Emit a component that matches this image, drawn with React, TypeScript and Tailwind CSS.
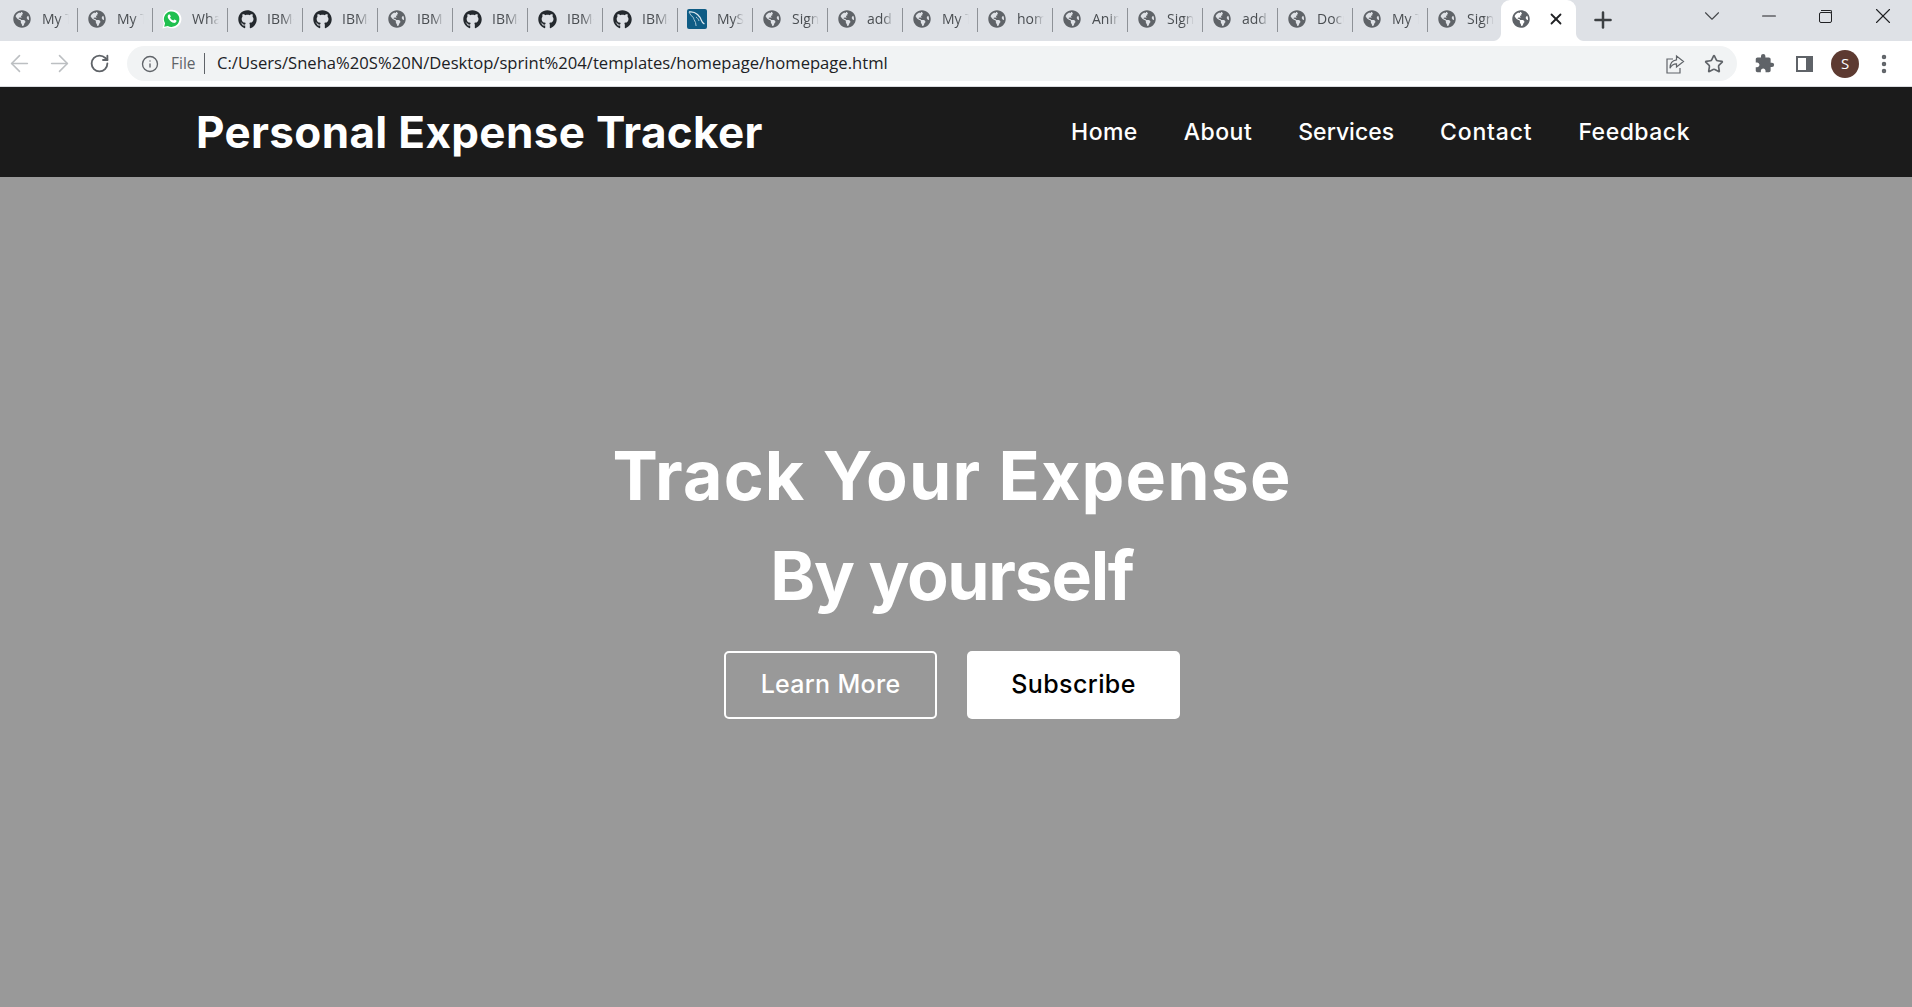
import { FaGlobeAmericas, FaGithub } from "react-icons/fa";
import { MdExtension } from "react-icons/md";
import { ArrowLeft, ArrowRight, RotateCw, Info, Star, Plus, X, ChevronDown, Minus, EllipsisVertical } from "lucide-react";

type Kind = "globe" | "github" | "whatsapp" | "mysql";
const tabs: [Kind, string][] = [
  ["globe", "My Tracker"], ["globe", "My Tracker"], ["whatsapp", "WhatsApp"],
  ["github", "IBM-EPBL"], ["github", "IBM-EPBL"], ["globe", "IBM Cloud"],
  ["github", "IBM-EPBL"], ["github", "IBM-EPBL"], ["github", "IBM-EPBL"],
  ["mysql", "MySQL"], ["globe", "Sign in"], ["globe", "add expense"],
  ["globe", "My Tracker"], ["globe", "homepage"], ["globe", "Animation"],
  ["globe", "Sign in"], ["globe", "add expense"], ["globe", "Document"],
  ["globe", "My Tracker"], ["globe", "Sign in"],
];

function TabIcon({ kind }: { kind: Kind }) {
  if (kind === "github") return <FaGithub className="w-[19px] h-[19px] text-[#24292e] shrink-0" />;
  if (kind === "whatsapp")
    return (
      <svg viewBox="0 0 24 24" className="w-[20px] h-[20px] shrink-0">
        <path d="M0.5 23.5l1.7-6.2A11.2 11.2 0 1 1 6.6 21.8z" fill="#ffffff" />
        <path d="M2.6 21.4l1.1-4.2A9.3 9.3 0 1 1 7 20.3z" fill="#1fc04f" />
        <path
          d="M8.6 6.6c-.5 0-1.3.5-1.6 1.4-.4 1.2 0 2.8 1.4 4.6 1.6 2.2 3.6 3.6 5.6 4 1.3.3 2.6-.3 3.1-1.3.3-.6.3-1.3.2-1.4l-2.5-1.3-1.2 1.3c-1.7-.6-3.2-2-4-3.7l1-1.2-1.1-2.4z"
          fill="#ffffff"
        />
      </svg>
    );
  if (kind === "mysql")
    return (
      <svg viewBox="0 0 20 20" className="w-[20px] h-[20px] shrink-0">
        <rect width="20" height="20" rx="2" fill="#0f5c85" />
        <path d="M2 3c3-.6 6 .3 8.5 2.4 2.300 2 3.300 4 3.900 6 .4 1.300 1.400 2.600 3 3.600" fill="none" stroke="#dfe9ef" strokeWidth="1.300" />
        <path d="M2 3l2 3.500c1.500.6 2.500 2 3 4l1.500 3 .6 3.500M9 8c1.600 1 2.600 2.400 3 4" fill="none" stroke="#a9c6d6" strokeWidth="1" />
      </svg>
    );
  return <FaGlobeAmericas className="w-[18px] h-[18px] text-[#5f6368] shrink-0" />;
}

function Tab({ kind, label, last }: { kind: Kind; label: string; last: boolean }) {
  return (
    <div className={`w-[75px] h-[24px] shrink-0 flex items-center pl-[9.5px] gap-[10px] ${last ? "" : "border-r border-[#8e9297]"}`}>
      <span className="w-[20px] flex justify-center mt-[-2px] shrink-0">
        <TabIcon kind={kind} />
      </span>
      <span className="w-[27px] mt-[-3px] overflow-hidden whitespace-nowrap text-[14px] text-[#4a4e52] [mask-image:linear-gradient(to_right,black_60%,transparent)]">
        {label}
      </span>
    </div>
  );
}

function Browser() {
  return (
    <div className="font-['Open_Sans',sans-serif]">
      <div className="h-[41px] bg-[#dee1e6] flex pl-[2.5px]">
        <div className="flex items-start pt-[8px] shrink-0">
          {tabs.map(([k, l], i) => (
            <Tab key={i} kind={k} label={l} last={i === tabs.length - 1} />
          ))}
        </div>
        <div className="relative w-[75px] h-[41px] bg-white rounded-t-[9px] flex items-center pl-[11px] pb-[3px] gap-[17px] ml-[-1.5px] shrink-0">
          <span className="absolute -left-[8px] bottom-0 w-[8px] h-[8px] bg-[radial-gradient(circle_at_0_0,transparent_7.5px,white_8.5px)]" />
          <span className="absolute -right-[8px] bottom-0 w-[8px] h-[8px] bg-[radial-gradient(circle_at_100%_0,transparent_7.5px,white_8.5px)]" />
          <FaGlobeAmericas className="w-[18px] h-[18px] text-[#5f6368]" />
          <X className="w-[18px] h-[18px] text-[#202124]" strokeWidth={2.4} />
        </div>
        <div className="h-[39px] flex items-center ml-[14px]">
          <Plus className="w-[26px] h-[26px] text-[#3c4043]" strokeWidth={2.3} />
        </div>
        <div className="ml-auto flex h-[32px] items-center shrink-0">
          <span className="w-[57px] flex justify-center">
            <ChevronDown className="w-[26px] h-[26px] text-[#44474b]" strokeWidth={1} />
          </span>
          <span className="w-[57px] flex justify-center">
            <Minus className="w-[22px] h-[22px] text-[#202124]" strokeWidth={1.2} />
          </span>
          <span className="w-[57px] flex justify-center">
            <span className="relative w-[13px] h-[11px] mt-[2px] border border-[#202124] rounded-[2px]">
              <span className="absolute -top-[3px] left-[1px] w-[11px] h-[3px] border-t border-r border-[#202124] rounded-tr-[2px]" />
            </span>
          </span>
          <span className="w-[58px] flex justify-center">
            <X className="w-[26px] h-[26px] text-[#202124]" strokeWidth={1} />
          </span>
        </div>
      </div>
      <div className="h-[45px] bg-white flex items-start pt-[5px]">
        <div className="w-[127px] h-[35px] flex items-center pl-[5.5px] shrink-0">
          <ArrowLeft className="w-[27px] h-[27px] text-[#bcbfc2]" strokeWidth={1.4} />
          <ArrowRight className="w-[27px] h-[27px] text-[#bcbfc2] ml-[13px]" strokeWidth={1.4} />
          <RotateCw className="w-[21px] h-[21px] text-[#5f6368] ml-[16px]" strokeWidth={2.1} />
        </div>
        <div className="w-[1610px] h-[35px] bg-[#f1f3f4] rounded-full flex items-center pl-[13.5px] pr-[13.5px] shrink-0">
          <Info className="w-[18px] h-[18px] text-[#5f6368]" strokeWidth={1.8} />
          <span className="ml-[12.5px] w-[33px] text-[15.5px] text-[#5f6368]">File</span>
          <span className="w-px h-[21px] bg-[#5f6368]" />
          <span className="ml-[12px] text-[16.62px] text-[#202124] whitespace-nowrap">
            C:/Users/Sneha%20S%20N/Desktop/sprint%204/templates/homepage/homepage.html
          </span>
          <svg viewBox="0 0 20 20" className="w-[20px] h-[20px] ml-auto text-[#5f6368]" fill="none" stroke="currentColor" strokeWidth="1.2">
            <path d="M8 5H2v14h13v-5" />
            <path d="M11.500 2l7 5.500-7 5.500v-3.200c-3 0-5 1-6.500 4.500 0-5.500 2.500-8 6.500-8.500z" />
          </svg>
          <Star className="w-[20px] h-[20px] text-[#5f6368] ml-[18.5px]" strokeWidth={2} />
        </div>
        <div className="h-[35px] flex items-center pl-[16.5px]">
          <MdExtension className="w-[21px] h-[21px] text-[#5f6368]" />
          <span className="ml-[21.5px] w-[17px] h-[16px] border-[2.5px] border-[#5f6368] border-r-[7px]" />
          <span className="ml-[18px] w-[28px] h-[28px] rounded-full bg-[#5d3a31] text-white text-[15px] flex items-center justify-center">S</span>
          <EllipsisVertical className="w-[24px] h-[24px] text-[#5f6368] ml-[13px]" strokeWidth={2.5} />
        </div>
      </div>
      <div className="h-px bg-[#dadce0]" />
    </div>
  );
}

export default function App() {
  return (
    <div className="w-[1912px] h-[1007px] overflow-hidden bg-[#999999] flex flex-col font-['Inter',sans-serif]">
      <Browser />
      <header className="h-[90px] bg-[#1b1b1b] flex items-center justify-between pl-[196px] pr-[222px] shrink-0">
        <div className="text-white text-[44px] font-bold tracking-[0.35px] whitespace-nowrap">Personal Expense Tracker</div>
        <nav className="flex gap-[46px] text-white text-[23px] font-medium">
          <a className="tracking-[0.4px]">Home</a>
          <a className="tracking-[0.5px]">About</a>
          <a className="tracking-[0px]">Services</a>
          <a className="tracking-[0.8px]">Contact</a>
          <a className="tracking-[0.5px]">Feedback</a>
        </nav>
      </header>
      <main className="flex flex-col items-center pt-[248px] pr-[8px]">
        <h1 className="text-white text-[68px] leading-[100px] font-bold text-center">
          <span className="block tracking-[1.15px]">Track Your Expense</span>
          <span className="block tracking-[-1.3px]">By yourself</span>
        </h1>
        <div className="flex gap-[30px] mt-[26px]">
          <button className="w-[213px] h-[68px] border-2 border-white rounded-[5px] text-white text-[25px] font-medium tracking-[0.3px]">Learn More</button>
          <button className="w-[213px] h-[68px] bg-white rounded-[5px] text-black text-[25px] font-medium tracking-[0.4px]">Subscribe</button>
        </div>
      </main>
    </div>
  );
}
